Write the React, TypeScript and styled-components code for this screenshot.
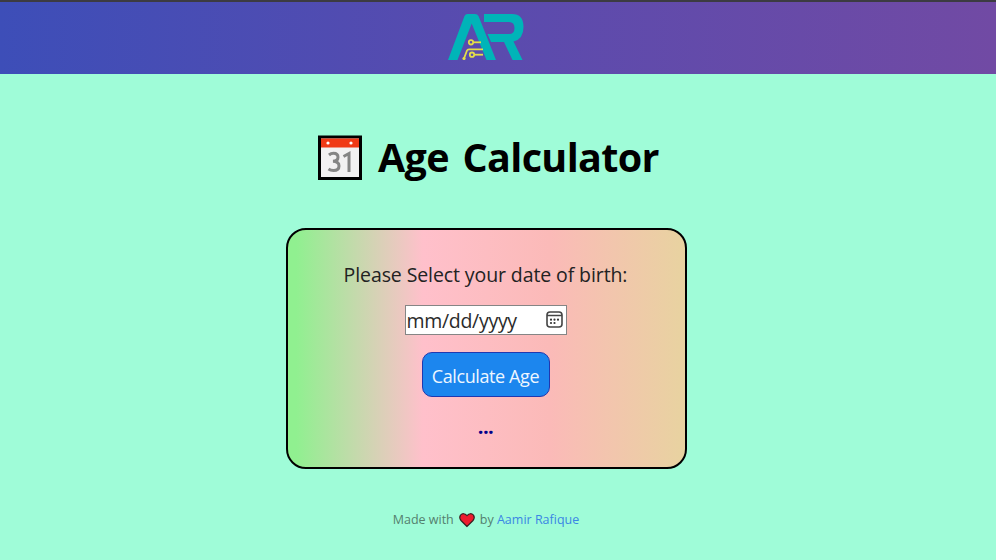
import React from "react";
import styled, { createGlobalStyle } from "styled-components";

const GlobalStyle = createGlobalStyle`
  * { box-sizing: border-box; }
  body {
    margin: 0;
    background: #9ffcd8;
    font-family: "Open Sans", "Noto Sans", sans-serif;
    overflow: hidden;
  }
`;

const Page = styled.div`
  display: flex;
  flex-direction: column;
  align-items: center;
  height: 560px;
  background: #9ffcd8;
`;

const Header = styled.header`
  display: flex;
  justify-content: center;
  width: 100%;
  height: 74px;
  flex: none;
  padding: 10px 24px 0 0;
  border-top: 2px solid #3c3b42;
  background: linear-gradient(to right, #3d4eb8, #5a4bae 50%, #714aa4);
`;

const Title = styled.h1`
  display: flex;
  align-items: center;
  gap: 16px;
  width: 341px;
  height: 46px;
  margin: 61px 19px 0 0;
  color: #000;
  font-size: 39.5px;
  line-height: 44px;
  font-weight: 700;
  letter-spacing: -0.65px;
  word-spacing: 4px;
  white-space: nowrap;

  span {
    padding-bottom: 2px;
  }
`;

const Card = styled.main`
  display: flex;
  flex-direction: column;
  align-items: center;
  width: 401px;
  height: 241px;
  flex: none;
  margin: 47px 24px 0 0;
  padding: 31px 1px 0 0;
  border: 2px solid #000;
  border-radius: 20px;
  background: linear-gradient(to right, #90f090 2%, #ffc0cb 34%, #fbbab8 66%, #e8d3a0);
`;

const Label = styled.label`
  height: 28px;
  line-height: 28px;
  font-size: 19.5px;
  letter-spacing: -0.1px;
  color: #222;
  white-space: nowrap;
`;

const DateField = styled.div`
  display: flex;
  align-items: center;
  justify-content: space-between;
  width: 162px;
  height: 30px;
  margin-top: 16px;
  padding: 0 3px 0 1px;
  border: 1px solid #858585;
  background: #fff;
  color: #2b2b2b;
  font-size: 19.5px;
  letter-spacing: -0.3px;
  white-space: nowrap;
`;

const CalcButton = styled.button`
  width: 128px;
  height: 45px;
  margin-top: 17px;
  padding: 2px 0 0;
  border: 1.5px solid #2038b0;
  border-radius: 10px;
  background: #1c86ee;
  color: #eef6ff;
  font: 400 18px "Open Sans", sans-serif;
  letter-spacing: -0.4px;
  white-space: nowrap;
`;

const Result = styled.output`
  height: 30px;
  margin-top: 15px;
  color: #00008b;
  font-size: 20px;
  line-height: 30px;
  font-weight: 700;
  letter-spacing: -0.6px;
`;

const Footer = styled.footer`
  display: flex;
  align-items: center;
  gap: 4px;
  height: 20px;
  margin: 41px 24px 0 0;
  color: #54806e;
  font-size: 12.5px;
  line-height: 20px;
  white-space: nowrap;
`;

const Author = styled.a`
  color: #3a86e4;
  text-decoration: none;
`;

const Logo = () => (
  <svg width="78" height="50" viewBox="447 12 78 50" role="img">
    <path d="M448 60 L464.5 16 Q465.500 14 467.500 14 H475 Q477.500 14 478.500 16 L496 60 H486.500 L471.700 23.500 L457.500 60 Z" fill="#00b4b8" />
    <path d="M484 14 H512 Q523.500 14 523.500 27 Q523.500 39 513.500 41.500 L522.500 60 H512.500 L504 42 H491 L487.500 34 H509 Q514.500 34 514.500 28 Q514.500 22 509 22 H484 Z" fill="#00b4b8" />
    <g fill="none" stroke="#e3de48" strokeWidth="1.800">
      <circle cx="471" cy="42.300" r="2.200" />
      <path d="M473.500 42.300 H481" />
      <path d="M464 58.500 L467 50.500 Q467.500 49.300 469 49.300 H483" />
      <circle cx="472" cy="54.700" r="2.200" />
      <path d="M474.500 54.700 H483" />
    </g>
    <circle cx="464" cy="58.500" r="1.600" fill="#e3de48" />
  </svg>
);

const DayIcon = () => (
  <svg width="44" height="46" viewBox="0 0 44 46">
    <rect x="1.500" y="2" width="41" height="41.500" fill="#f2f1f2" stroke="#000" strokeWidth="3" />
    <rect x="3" y="3.500" width="38" height="9" fill="#f03a17" />
    <circle cx="10" cy="8" r="1.600" fill="#fff" />
    <circle cx="33" cy="8" r="1.600" fill="#fff" />
    <g fill="none" stroke="#858585" strokeWidth="3">
      <path d="M11 20 Q13 18.300 15.500 18.300 Q20 18.300 20 22.300 Q20 26 15 26.300 Q21 26.500 21 31 Q21 35.500 15.500 35.500 Q12.500 35.500 10.500 34" />
      <path d="M25.500 21.500 L31 18.500 V37" />
    </g>
  </svg>
);

const PickerIcon = () => (
  <svg width="17" height="18" viewBox="0 0 17 18">
    <rect x="1" y="1" width="15" height="15" rx="3" fill="none" stroke="#444" strokeWidth="1.600" />
    <path d="M1 4.500 H16" stroke="#444" strokeWidth="1.500" />
    <g fill="#333">
      <circle cx="5" cy="8.700" r="1.100" />
      <circle cx="8.500" cy="8.700" r="1.100" />
      <circle cx="12" cy="8.700" r="1.100" />
      <circle cx="5" cy="12" r="1.100" />
      <circle cx="8.500" cy="12" r="1.100" />
    </g>
  </svg>
);

const Heart = () => (
  <svg width="18" height="16" viewBox="0 0 18 16">
    <path d="M9 14.500 L3 8.500 Q0.800 5.800 2.500 3.200 Q5.500 0 9 3.700 Q12.500 0 15.500 3.200 Q17.200 5.800 15 8.500 Z" fill="#ed1c2e" stroke="#382020" strokeWidth="1.200" />
  </svg>
);

export default function App() {
  return (
    <>
      <GlobalStyle />
      <Page>
        <Header><Logo /></Header>
        <Title><DayIcon /><span>Age Calculator</span></Title>
        <Card>
          <Label>Please Select your date of birth:</Label>
          <DateField><span>mm/dd/yyyy</span><PickerIcon /></DateField>
          <CalcButton>Calculate Age</CalcButton>
          <Result>...</Result>
        </Card>
        <Footer>
          <span>Made with</span>
          <Heart />
          <span>by <Author>Aamir Rafique</Author></span>
        </Footer>
      </Page>
    </>
  );
}
